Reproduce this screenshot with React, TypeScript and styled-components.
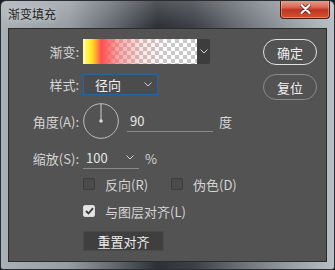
import { ReactNode } from "react";
import styled, { createGlobalStyle } from "styled-components";

const GlobalStyle = createGlobalStyle`
  html, body {
    margin: 0;
    padding: 0;
    background: #1c1d1f;
  }
  body {
    font-family: "Noto Sans CJK SC", "Noto Sans", sans-serif;
    font-size: 13px;
  }
`;

// window chrome

const Window = styled.div`
  box-sizing: border-box;
  width: 335px;
  height: 270px;
  display: flex;
  flex-direction: column;
  padding: 0 7px 7px 7px;
  border: 1px solid #2a2e33;
  border-radius: 6px 6px 3px 3px;
  background:
    linear-gradient(180deg, rgba(255, 255, 255, 0.18) 0px, rgba(255, 255, 255, 0) 26px),
    linear-gradient(90deg, #aab1b6 0%, #979ea3 20%, #62686e 34%, #2d3035 47%, #3c4046 58%, #6a7076 72%, #959ca1 86%, #b9c0c5 100%);
  overflow: hidden;
`;

const TitleBar = styled.div`
  height: 27px;
  display: flex;
  align-items: flex-start;
  justify-content: space-between;
`;

const Title = styled.span`
  margin-top: 4px;
  font-size: 12px;
  color: #1c1c1c;
  text-shadow: 0 0 6px rgba(255, 255, 255, 0.7);
`;

const CloseButton = styled.div`
  width: 48px;
  height: 18px;
  margin-right: -3px;
  margin-top: -1px;
  display: flex;
  align-items: center;
  justify-content: center;
  border: 1px solid #4a1a14;
  border-top: none;
  border-radius: 0 0 4px 4px;
  box-shadow: inset 0 0 0 1px rgba(255, 200, 180, 0.45);
  background: linear-gradient(180deg, #e8a595 0%, #d66a55 40%, #c03522 55%, #d4502e 100%);
`;

const Panel = styled.div`
  flex: 1;
  display: flex;
  justify-content: space-between;
  border: 1px solid #2c2c2c;
  background: #535353;
  color: #d4d4d4;
`;

// form

const Form = styled.div`
  display: flex;
  flex-direction: column;
  padding-top: 10px;
`;

const Row = styled.div<{ $top: number; $height: number }>`
  display: flex;
  align-items: center;
  margin-top: ${(p) => p.$top}px;
  height: ${(p) => p.$height}px;
`;

const Label = styled.span`
  width: 70px;
  margin-right: 4px;
  text-align: right;
  white-space: nowrap;
`;

const GradientBox = styled.div`
  display: flex;
  height: 25px;
`;

const GradientSwatch = styled.div`
  width: 114px;
  height: 25px;
  background:
    linear-gradient(90deg, #fffbc0 0%, #fff04a 4%, #ffe21e 8%, #ff9a38 12%, #ff4e4e 16%, rgba(255, 90, 90, 0.55) 30%, rgba(255, 120, 120, 0.2) 50%, rgba(255, 255, 255, 0) 75%),
    repeating-conic-gradient(#c9c9c9 0 25%, #ffffff 0 50%) 0 0 / 8px 8px;
`;

const GradientDrop = styled.div`
  width: 13px;
  height: 25px;
  display: flex;
  align-items: center;
  justify-content: center;
  background: #3d3d3d;
  border-radius: 0 2px 2px 0;
`;

const Select = styled.div`
  box-sizing: border-box;
  width: 75px;
  height: 21px;
  display: flex;
  align-items: center;
  justify-content: space-between;
  padding: 0 5px 0 11px;
  border: 1px solid #2763a8;
  background: #4c4c4c;
  color: #f2f2f2;
`;

const Dial = styled.svg`
  display: block;
`;

const UnderlineInput = styled.div<{ $width: number }>`
  box-sizing: border-box;
  width: ${(p) => p.$width}px;
  display: flex;
  align-items: center;
  justify-content: space-between;
  padding: 0 5px 1px 3px;
  border-bottom: 1px solid #8a8a8a;
  color: #e6e6e6;
`;

const Unit = styled.span<{ $gap: number }>`
  margin-left: ${(p) => p.$gap}px;
`;

const CheckItem = styled.label<{ $width?: number }>`
  display: flex;
  align-items: center;
  width: ${(p) => (p.$width ? `${p.$width}px` : "auto")};
  white-space: nowrap;
`;

const Box = styled.span<{ $checked?: boolean }>`
  box-sizing: border-box;
  width: 12px;
  height: 12px;
  margin-right: 10px;
  display: flex;
  align-items: center;
  justify-content: center;
  border-radius: 2px;
  border: 1px solid ${(p) => (p.$checked ? "#d8d8d8" : "#3c3c3c")};
  background: ${(p) => (p.$checked ? "#e4e4e4" : "#4b4b4b")};
`;

const FlatButton = styled.div`
  box-sizing: border-box;
  width: 81px;
  height: 20px;
  display: flex;
  align-items: center;
  justify-content: center;
  border: 1px solid #4a4a4a;
  background: #3f3f3f;
  color: #ececec;
`;

// right buttons

const Side = styled.div`
  display: flex;
  flex-direction: column;
  gap: 9px;
  padding: 10px 9px 0 0;
`;

const PillButton = styled.div<{ $primary?: boolean }>`
  box-sizing: border-box;
  width: 54px;
  height: 26px;
  display: flex;
  align-items: center;
  justify-content: center;
  border-radius: 13px;
  border: ${(p) => (p.$primary ? "1.5px solid #e2e2e2" : "1.5px solid #8b8b8b")};
  color: #f0f0f0;
`;

const Chevron = ({ color = "#cfcfcf" }: { color?: string }) => (
  <svg width="8" height="5" viewBox="0 0 8 5">
    <path d="M0.5 0.5 L4 4 L7.5 0.5" fill="none" stroke={color} strokeWidth="1" />
  </svg>
);

const Check = ({ checked, width, children }: { checked?: boolean; width?: number; children: ReactNode }) => (
  <CheckItem $width={width}>
    <Box $checked={checked}>
      {checked && (
        <svg width="9" height="8" viewBox="0 0 9 8">
          <path d="M1 4 L3.5 6.5 L8 1.2" fill="none" stroke="#3a3a3a" strokeWidth="1.8" />
        </svg>
      )}
    </Box>
    {children}
  </CheckItem>
);

export default function App() {
  return (
    <>
      <GlobalStyle />
      <Window>
        <TitleBar>
          <Title>渐变填充</Title>
          <CloseButton>
            <svg width="11" height="10" viewBox="0 0 11 10">
              <path d="M1.5 1 L9.5 9 M9.5 1 L1.5 9" stroke="#5a1a12" strokeWidth="3.6" strokeLinecap="round" />
              <path d="M1.5 1 L9.5 9 M9.5 1 L1.5 9" stroke="#ffffff" strokeWidth="2.2" strokeLinecap="round" />
            </svg>
          </CloseButton>
        </TitleBar>
        <Panel>
          <Form>
            <Row $top={0} $height={25}>
              <Label>渐变:</Label>
              <GradientBox>
                <GradientSwatch />
                <GradientDrop>
                  <Chevron />
                </GradientDrop>
              </GradientBox>
            </Row>
            <Row $top={10} $height={21}>
              <Label>样式:</Label>
              <Select>
                径向
                <Chevron />
              </Select>
            </Row>
            <Row $top={8} $height={36}>
              <Label>角度(A):</Label>
              <Dial width="36" height="36" viewBox="0 0 36 36">
                <circle cx="18" cy="18" r="17.3" fill="none" stroke="#bdbdbd" strokeWidth="1" />
                <line x1="18" y1="1" x2="18" y2="18" stroke="#cfcfcf" strokeWidth="1" />
                <circle cx="18" cy="18" r="1.8" fill="#d8d8d8" />
              </Dial>
              <Unit $gap={8}>
                <UnderlineInput $width={86}>90</UnderlineInput>
              </Unit>
              <Unit $gap={6}>度</Unit>
            </Row>
            <Row $top={8} $height={22}>
              <Label>缩放(S):</Label>
              <UnderlineInput $width={56}>
                100
                <Chevron />
              </UnderlineInput>
              <Unit $gap={6}>%</Unit>
            </Row>
            <Row $top={5} $height={20}>
              <Label />
              <Check width={88}>反向(R)</Check>
              <Check>伪色(D)</Check>
            </Row>
            <Row $top={7} $height={20}>
              <Label />
              <Check checked>与图层对齐(L)</Check>
            </Row>
            <Row $top={10} $height={20}>
              <Label />
              <FlatButton>重置对齐</FlatButton>
            </Row>
          </Form>
          <Side>
            <PillButton $primary>确定</PillButton>
            <PillButton>复位</PillButton>
          </Side>
        </Panel>
      </Window>
    </>
  );
}
